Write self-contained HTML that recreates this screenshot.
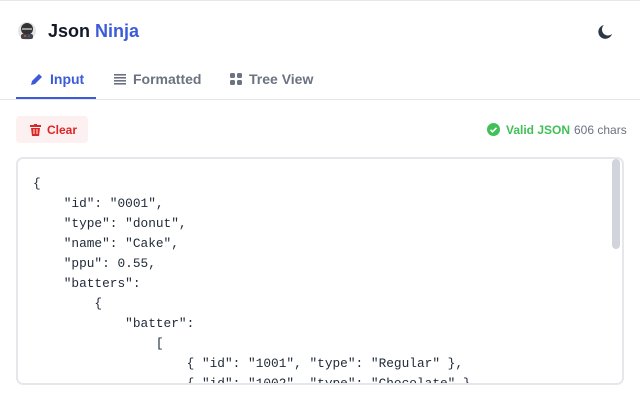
<!DOCTYPE html>
<html><head><style>
*{margin:0;padding:0;box-sizing:border-box}
body{width:640px;height:400px;background:#fff;font-family:"Liberation Sans",sans-serif;position:relative;overflow:hidden;border-top:1px solid #e5e7eb}
.abs{position:absolute}
.title{left:48px;top:20px;font-size:18px;font-weight:bold;color:#111827}
.title span{color:#3b5bdb}
.tab{top:70px;font-size:14px;font-weight:bold;color:#6b7280;display:flex;align-items:center;gap:7px}
.hr{left:0;top:98px;width:640px;height:1px;background:#e5e7eb}
.ul{left:16px;top:96px;width:80px;height:2px;background:#3b5bdb}
.clear{left:16px;top:115px;width:72px;height:27px;background:#fdf0f0;border-radius:4px;color:#dc2626;font-size:12px;font-weight:bold;display:flex;align-items:center;padding-left:14px;gap:6px}
.box{left:16px;top:156px;width:608px;height:228px;border:2px solid #e5e7eb;border-radius:7px;overflow:hidden}
pre{position:absolute;left:15px;top:15px;font-family:"Liberation Mono",monospace;font-size:12.8px;line-height:20px;color:#1f2937}
.sb{right:2px;top:0px;width:8px;height:90px;background:#d1d5db;border-radius:4px}
</style></head><body>
<svg class="abs" style="left:17px;top:20px" width="20" height="20" viewBox="0 0 20 20"><circle cx="10" cy="10" r="9" fill="#e5e5e5"/><circle cx="10" cy="8" r="6" fill="#333"/><rect x="5" y="7" width="10" height="2" fill="#999"/><rect x="4" y="13" width="12" height="5" rx="2" fill="#444"/><circle cx="8" cy="15" r="1" fill="#e44"/><circle cx="12" cy="15" r="1" fill="#3b5bdb"/></svg>
<div class="abs title">Json <span>Ninja</span></div>
<svg class="abs" style="left:597px;top:23px" width="16" height="16" viewBox="0 0 16 16"><path d="M7 1A7 7 0 1 0 15 10 6 6 0 0 1 7 1Z" fill="#2d3748"/></svg>
<div class="abs tab" style="left:30px;color:#3b5bdb"><svg width="13" height="13" viewBox="0 0 13 13"><path d="M1 12l1-4 7-7 3 3-7 7z" fill="#3b5bdb"/></svg>Input</div>
<div class="abs tab" style="left:114px"><svg width="12" height="12" viewBox="0 0 12 12" fill="#6b7280"><rect y="1" width="12" height="1.6"/><rect y="4" width="12" height="1.6"/><rect y="7" width="12" height="1.6"/><rect y="10" width="12" height="1.6"/></svg>Formatted</div>
<div class="abs tab" style="left:230px"><svg width="12" height="12" viewBox="0 0 12 12" fill="#6b7280"><rect width="5" height="5" rx="1.5"/><rect x="7" width="5" height="5" rx="1.5"/><rect y="7" width="5" height="5" rx="1.5"/><rect x="7" y="7" width="5" height="5" rx="1.5"/></svg>Tree View</div>
<div class="abs hr"></div><div class="abs ul"></div>
<div class="abs clear"><svg width="11" height="12" viewBox="0 0 11 12" fill="#dc2626"><rect x="0" y="1" width="11" height="2"/><rect x="4" y="0" width="3" height="2"/><path d="M1 4h9l-1 8H2z"/><rect x="3.5" y="5" width="1" height="5" fill="#fdf0f0"/><rect x="6.5" y="5" width="1" height="5" fill="#fdf0f0"/></svg>Clear</div>
<svg class="abs" style="left:487px;top:122px" width="13" height="13" viewBox="0 0 13 13"><circle cx="6.5" cy="6.5" r="6.5" fill="#40c057"/><path d="M3.5 6.8l2 2 4-4" stroke="#fff" stroke-width="1.6" fill="none"/></svg>
<div class="abs" style="left:506px;top:122px;font-size:12px;font-weight:bold;color:#40c057">Valid JSON</div>
<div class="abs" style="left:574px;top:122px;font-size:12px;color:#6b7280">606 chars</div>
<div class="abs box"><pre>{
    "id": "0001",
    "type": "donut",
    "name": "Cake",
    "ppu": 0.55,
    "batters":
        {
            "batter":
                [
                    { "id": "1001", "type": "Regular" },
                    { "id": "1002", "type": "Chocolate" },</pre><div class="abs sb"></div></div>
</body></html>
